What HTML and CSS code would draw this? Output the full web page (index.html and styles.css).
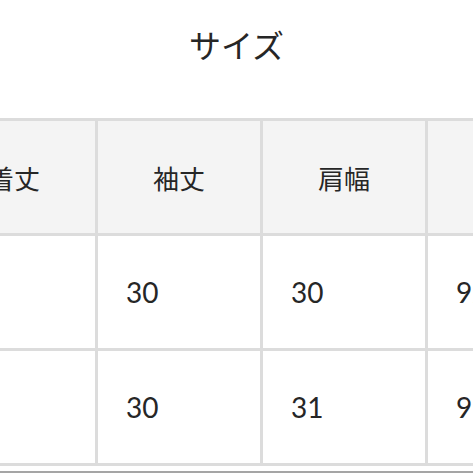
FILE: index.html
```html
<!DOCTYPE html>
<html lang="ja">
<head>
<meta charset="utf-8">
<title>サイズ</title>
<link rel="stylesheet" href="styles.css">
</head>
<body>
<section class="size-section">
  <h2 class="size-title">サイズ</h2>
  <div class="table-wrap">
    <table class="size-table">
      <thead>
        <tr>
          <th>着丈</th>
          <th>袖丈</th>
          <th>肩幅</th>
          <th>身幅</th>
        </tr>
      </thead>
      <tbody>
        <tr>
          <td>66</td>
          <td>30</td>
          <td>30</td>
          <td>92</td>
        </tr>
        <tr>
          <td>68</td>
          <td>30</td>
          <td>31</td>
          <td>96</td>
        </tr>
      </tbody>
    </table>
  </div>
  <div class="divider"></div>
</section>
</body>
</html>
```

FILE: styles.css
```css
html, body {
  margin: 0;
  padding: 0;
  background: #ffffff;
}

body {
  font-family: "Lato", "Noto Sans CJK JP", sans-serif;
  color: #262626;
  overflow: hidden;
}

.size-section {
  display: flex;
  flex-direction: column;
}

.size-title {
  margin: 0;
  padding-top: 28px;
  font-family: "Noto Sans CJK JP", sans-serif;
  font-size: 32px;
  line-height: 33px;
  font-weight: 400;
  text-align: center;
  letter-spacing: 0;
}

.table-wrap {
  margin-top: 57px;
  overflow: hidden;
}

.size-table {
  margin-left: -70px;
  border-collapse: separate;
  border-spacing: 0;
  table-layout: fixed;
  width: 663px;
  border-top: 3px solid #dcdcdc;
  border-left: 3px solid #dcdcdc;
}

.size-table th,
.size-table td {
  box-sizing: border-box;
  width: 165px;
  height: 115px;
  padding: 0 28px;
  border-right: 3px solid #dcdcdc;
  border-bottom: 3px solid #dcdcdc;
  vertical-align: middle;
}

.size-table th {
  background: #f4f4f4;
  font-family: "Noto Sans CJK JP", sans-serif;
  font-size: 26px;
  font-weight: 400;
  text-align: center;
}

.size-table td {
  background: #ffffff;
  font-size: 28px;
  text-align: left;
}

.divider {
  margin-top: 5px;
  border-top: 2px solid #a5a5a5;
}
```
